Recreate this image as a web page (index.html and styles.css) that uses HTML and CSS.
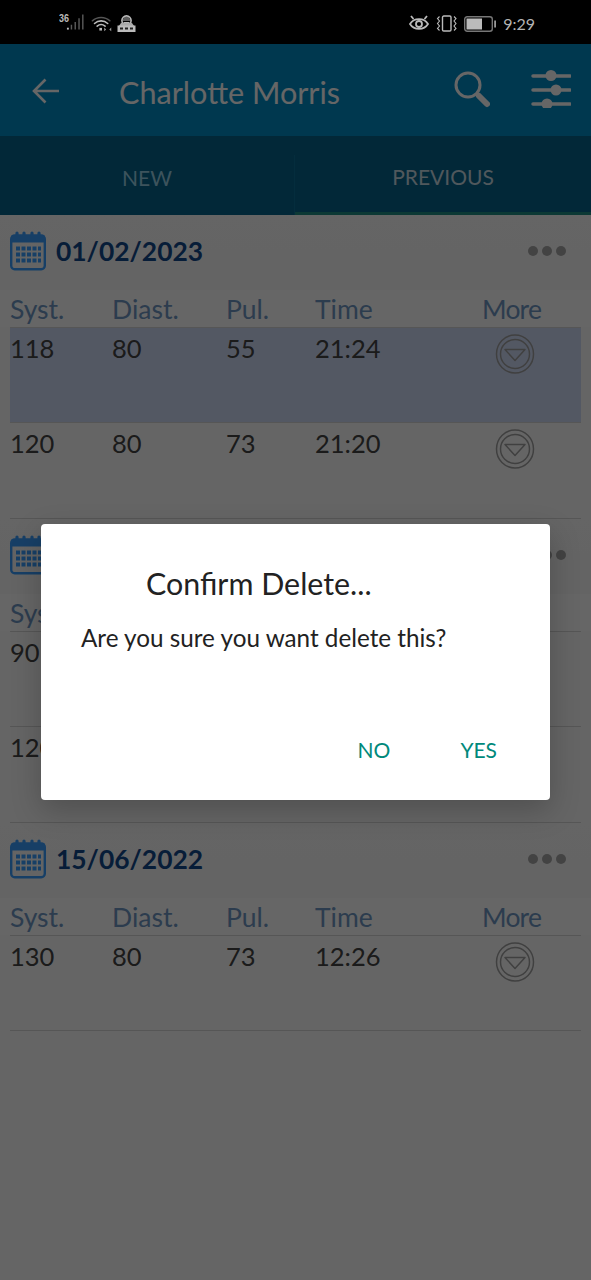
FILE: index.html
```html
<!DOCTYPE html>
<html lang="en">
<head>
<meta charset="utf-8">
<title>Charlotte Morris</title>
<link rel="stylesheet" href="styles.css">
</head>
<body>
<svg class="defs" width="0" height="0" aria-hidden="true">
  <defs>
    <symbol id="cal" viewBox="0 0 36 40">
      <rect x="1.2" y="5" width="33.6" height="33.8" rx="3.500" fill="none" stroke="currentColor" stroke-width="2.400"/>
      <rect x="1.2" y="5" width="33.6" height="7" fill="currentColor"/>
      <g fill="none" stroke="currentColor" stroke-width="3.200" stroke-linecap="round">
        <path d="M7 8V2.500M14 8V2.500M22 8V2.500M29 8V2.500"/>
      </g>
      <g fill="currentColor">
        <path d="M6 16h4v4H6zM11.500 16h4v4h-4zM17 16h4v4h-4zM22.500 16h4v4h-4zM28 16h3v4h-3zM6 22h4v4H6zM11.500 22h4v4h-4zM17 22h4v4h-4zM22.500 22h4v4h-4zM28 22h3v4h-3zM6 28h4v4H6zM11.500 28h4v4h-4zM17 28h4v4h-4zM22.500 28h4v4h-4zM28 28h3v4h-3z"/>
      </g>
    </symbol>
    <symbol id="more" viewBox="0 0 40 40">
      <g fill="none" stroke="#a0a0a0" stroke-width="1.500">
        <circle cx="20" cy="20" r="18.500" transform="matrix(1 0 0 1.030 0 -.6)"/>
        <circle cx="20" cy="20" r="14.500"/>
        <path d="M10 15.500h20L20 26.500z" stroke-linejoin="round"/>
      </g>
    </symbol>
    <symbol id="dots" viewBox="0 0 40 14">
      <circle cx="6" cy="7" r="5" fill="currentColor"/>
      <circle cx="20" cy="7" r="5" fill="currentColor"/>
      <circle cx="34" cy="7" r="5" fill="currentColor"/>
    </symbol>
  </defs>
</svg>

<header class="status">
  <div class="status-left">
    <span class="net">36</span>
    <svg class="sig" width="18" height="17" viewBox="0 0 19 17"><path d="M1 14h2v2H1z" fill="#bbb"/><path d="M5 11h1.500v5H5zM9 8h1.500v8H9zM13 4h1.500v12H13zM17 0h1.500v16H17z" fill="#5a5a5a"/></svg>
    <svg class="wifi" width="22" height="17" viewBox="0 0 25 17"><g fill="none" stroke-linecap="round"><path d="M1.500 5.500a15 15 0 0 1 20 0" stroke="#555" stroke-width="1.600"/><path d="M4 8.500a11 11 0 0 1 15 0" stroke="#bbb" stroke-width="1.800"/><path d="M7 11.500a7 7 0 0 1 9 0" stroke="#bbb" stroke-width="1.800"/></g><path d="M9.500 13.500h3v3h-3z" fill="#bbb"/><path d="M15 13l2.200 2.200L15 17.300zM23 13l-2.200 2.200 2.200 2.100z" fill="#999"/></svg>
    <svg class="vpn" width="19" height="17" viewBox="0 0 19 17"><circle cx="9.500" cy="5.500" r="4.600" fill="none" stroke="#bbb" stroke-width="1.600"/><path d="M5.500 5h8M6.500 3h6M6.500 7.500h6" stroke="#bbb"/><path d="M4 8l-2.500 3.500h16L15 8z" fill="#aaa"/><rect x=".5" y="10.500" width="18" height="6.500" fill="#bbb"/><path d="M3 12.500h3v2H3zM8 12.500h3v2H8zM13 12.500h3v2h-3z" fill="#222"/></svg>
  </div>
  <div class="status-right">
    <svg class="eye" width="20" height="17" viewBox="0 0 20 17"><g fill="none" stroke="#bbb" stroke-width="1.800"><path d="M1 9c4-6.500 14-6.500 18 0-4 6.500-14 6.500-18 0z"/><circle cx="10" cy="9" r="3"/></g><path d="M2 1l2.500 3M18 1l-2.500 3" stroke="#bbb" stroke-width="1.800"/></svg>
    <svg class="vib" width="21" height="17" viewBox="0 0 20 17"><rect x="6" y="1" width="8.500" height="15" rx="1.300" fill="none" stroke="#bbb" stroke-width="1.400"/><path d="M3 1.500l-2 2 2 2.500-2 2.500 2 2.500-2 2.500 2 2M17.500 1.500l2 2-2 2.500 2 2.500-2 2.500 2 2.500-2 2" fill="none" stroke="#bbb" stroke-width="1.100"/></svg>
    <svg class="bat" width="33" height="16" viewBox="0 0 33 16"><rect x=".7" y=".7" width="27.600" height="14.600" rx="2.500" fill="none" stroke="#777" stroke-width="1.400"/><rect x="2.500" y="2.500" width="15.500" height="11" fill="#bbb"/><rect x="30.200" y="4.500" width="1.800" height="7" fill="#999"/></svg>
    <span class="clock">9:29</span>
  </div>
</header>

<div class="appbar">
  <svg class="back" width="28" height="26" viewBox="0 0 28 26"><path d="M27 13H3M13.500 1.500L2 13l11.500 11.500" fill="none" stroke="#fff" stroke-width="2.600"/></svg>
  <h1 class="title">Charlotte Morris</h1>
  <svg class="search" width="36" height="37" viewBox="0 0 36 37"><circle cx="14" cy="14" r="12" fill="none" stroke="#fff" stroke-width="3"/><path d="M23 23l2 2" stroke="#fff" stroke-width="2"/><path d="M25 25l8 8" stroke="#fff" stroke-width="6" stroke-linecap="round"/></svg>
  <svg class="filter" width="40" height="38" viewBox="0 0 40 38"><g stroke="#fff" stroke-width="3.500" stroke-linecap="round"><path d="M2 6h37M2 20h37M2 34h37"/></g><circle cx="20" cy="5.500" r="5.500" fill="#fff"/><circle cx="25" cy="20" r="5.500" fill="#fff"/><circle cx="16" cy="34" r="5.500" fill="#fff"/></svg>
</div>

<nav class="tabs">
  <div class="tab tab-new"><span>NEW</span></div>
  <div class="tab tab-prev"><span>PREVIOUS</span></div>
</nav>

<main class="list">
  <section class="day">
    <div class="day-head">
      <svg class="cal"><use href="#cal"/></svg>
      <span class="date">01/02/2023</span>
      <svg class="dots"><use href="#dots"/></svg>
    </div>
    <div class="cols"><span>Syst.</span><span>Diast.</span><span>Pul.</span><span>Time</span><span class="col-more">More</span></div>
    <div class="row row-sel"><span>118</span><span>80</span><span>55</span><span>21:24</span><svg class="more"><use href="#more"/></svg></div>
    <div class="row"><span>120</span><span>80</span><span>73</span><span>21:20</span><svg class="more"><use href="#more"/></svg></div>
  </section>
  <section class="day">
    <div class="day-head">
      <svg class="cal"><use href="#cal"/></svg>
      <span class="date"></span>
      <svg class="dots"><use href="#dots"/></svg>
    </div>
    <div class="cols"><span>Syst.</span></div>
    <div class="row"><span>90</span></div>
    <div class="row"><span>120</span></div>
  </section>
  <section class="day">
    <div class="day-head">
      <svg class="cal"><use href="#cal"/></svg>
      <span class="date">15/06/2022</span>
      <svg class="dots"><use href="#dots"/></svg>
    </div>
    <div class="cols"><span>Syst.</span><span>Diast.</span><span>Pul.</span><span>Time</span><span class="col-more">More</span></div>
    <div class="row"><span>130</span><span>80</span><span>73</span><span>12:26</span><svg class="more"><use href="#more"/></svg></div>
  </section>
</main>

<div class="scrim"></div>

<div class="dialog" role="dialog">
  <h2 class="dialog-title">Confirm Delete...</h2>
  <p class="dialog-text">Are you sure you want delete this?</p>
  <div class="dialog-actions">
    <span class="btn">NO</span>
    <span class="btn">YES</span>
  </div>
</div>
</body>
</html>
```
FILE: styles.css
```css
* { box-sizing: border-box; }
html, body { margin: 0; padding: 0; }
body {
  position: relative;
  width: 591px;
  height: 1280px;
  overflow: hidden;
  background: #fdfdfd;
  font-family: "Lato", "Noto Sans", sans-serif;
}
.defs { position: absolute; }

/* status bar */
.status {
  position: relative;
  z-index: 3;
  height: 44px;
  background: #000;
  display: flex;
  justify-content: space-between;
  align-items: center;
  padding: 0 56px 0 59px;
  color: #bbb;
}
.status-left, .status-right { display: flex; align-items: center; }
.net { font: 700 9px/1 "Liberation Sans", sans-serif; align-self: flex-start; margin: 1px 0 0; transform: scaleY(1.200); }
.sig { margin: 0 0 0 -3px; }
.wifi { margin: 2px 0 0 7px; }
.vpn { margin: 2px 0 0 4px; }
.status-right svg { display: block; }
.eye { margin: 2px 7px 0 0; }
.vib { margin: 2px 7px 0 0; }
.bat { margin: 3px 6px 0 0; }
.clock { font-size: 16px; line-height: 20px; color: #b4b4b4; margin-top: 3px; }

/* app bar */
.appbar {
  height: 92px;
  background: #028cc6;
  display: flex;
  align-items: center;
  color: #fff;
  padding-left: 32px;
}
.back { flex: none; margin-top: 2px; }
.title {
  margin: 6px 0 0 59px;
  flex: 1;
  font-size: 30.600px;
  line-height: 36px;
  font-weight: 400;
  color: #fff;
}
.search { margin: -2px 41px 0 0; flex: none; }
.filter { margin: -2px 20px 0 0; flex: none; }

/* tabs */
.tabs {
  height: 79px;
  background: #05648c;
  display: grid;
  grid-template-columns: 295px 296px;
}
.tab {
  display: flex;
  align-items: center;
  justify-content: center;
  font-size: 21px;
}
.tab-new { color: #99d0e6; margin-top: 19px; height: 60px; padding-bottom: 16px; border-right: 1px solid #0a7099; }
.tab-prev { color: #c8dce6; border-bottom: 3px solid #1f8f85; padding-top: 5px; }

/* list */
.list { display: flex; flex-direction: column; }
.day { padding: 0 10px; }
.day-head {
  height: 75px;
  display: flex;
  align-items: center;
  margin: 0 -10px;
  padding: 0 24px 3px 10px;
  background: linear-gradient(#fcfcfc, #fafafa);
}
.cal { width: 36px; height: 41px; color: #3b9fff; flex: none; margin-top: -1px; }
.date {
  margin: -1px 0 0 10px;
  flex: 1;
  font-size: 26.400px;
  font-weight: 700;
  color: #124a8c;
}
.dots { width: 40px; height: 14px; color: #a8a8a8; flex: none; }
.cols, .row {
  display: grid;
  grid-template-columns: 102px 114px 89px 167px 99px;
}
.cols {
  margin: 0 -10px;
  padding: 0 10px;
  height: 37px;
  background: #fff;
  font-size: 26.500px;
  line-height: 39px;
  color: #6f97c4;
}
.col-more { letter-spacing: -0.8px; }
.row {
  height: 95px;
  border-top: 1px solid #d8d8d8;
  font-size: 25.500px;
  line-height: 40px;
  color: #444;
}
.row:last-child { height: 96px; border-bottom: 1px solid #d8d8d8; }
.row + .row:last-child { height: 97px; }
.row-sel { background: #d0dcf8; }
.more { width: 40px; height: 40px; margin: 6px 0 0 13px; display: block; }

/* dialog */
.scrim {
  position: absolute;
  left: 0;
  right: 0;
  top: 44px;
  bottom: 0;
  z-index: 1;
  background: rgba(0, 0, 0, 0.6);
}
.dialog {
  position: absolute;
  z-index: 2;
  left: 41px;
  top: 524px;
  width: 509px;
  height: 276px;
  background: #fff;
  border-radius: 4px;
  box-shadow: 0 10px 30px rgba(0, 0, 0, 0.22);
  display: flex;
  flex-direction: column;
  padding: 40px 53px 37px 40px;
}
.dialog-title {
  margin: 0 0 0 65px;
  font-size: 30.400px;
  line-height: 38px;
  font-weight: 400;
  color: #222;
}
.dialog-text {
  margin: 21px 0 0;
  font-size: 24.250px;
  line-height: 30px;
  color: #222;
}
.dialog-actions {
  margin-top: auto;
  display: flex;
  justify-content: flex-end;
  gap: 70px;
}
.btn {
  font-size: 21px;
  line-height: 26px;
  color: #00897b;
}
```
